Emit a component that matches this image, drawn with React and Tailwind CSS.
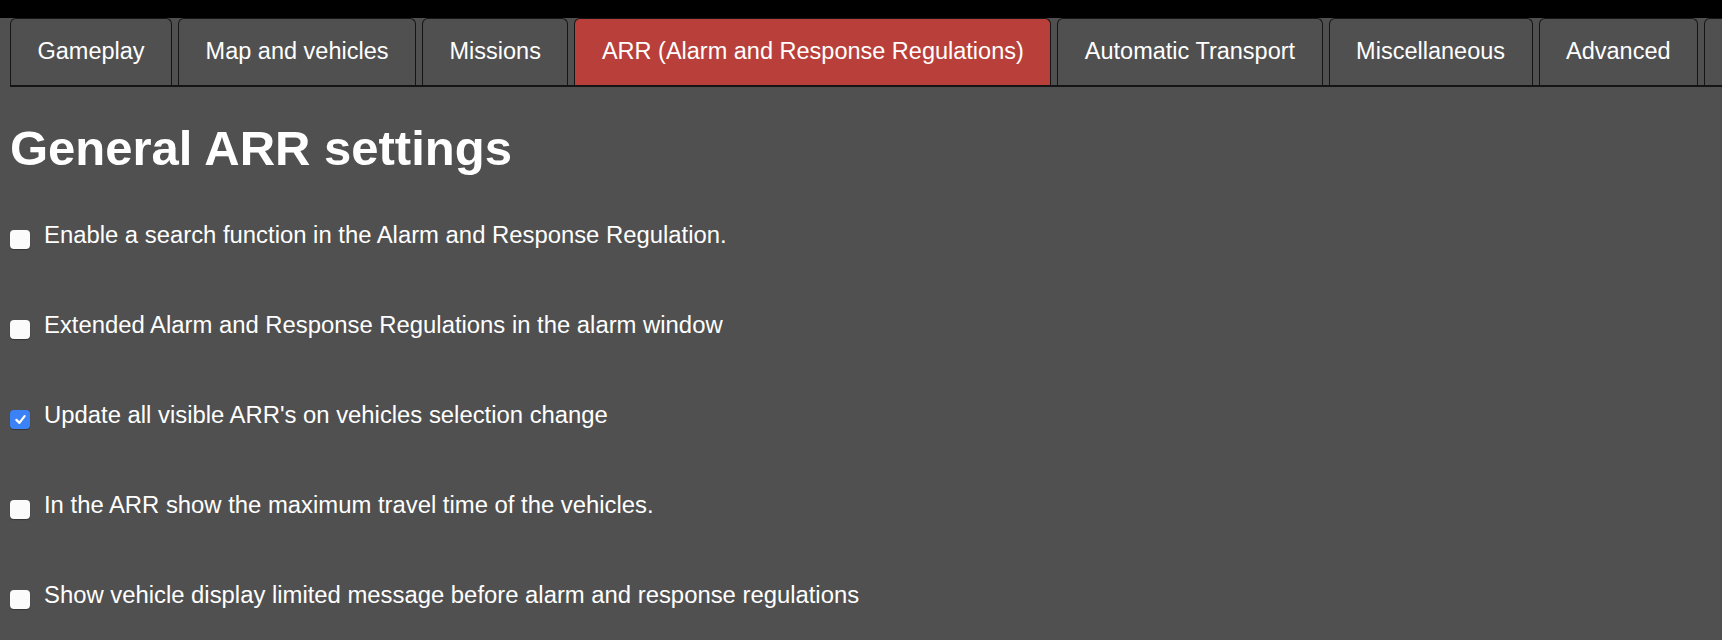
const tabs = [
  "Gameplay",
  "Map and vehicles",
  "Missions",
  "ARR (Alarm and Response Regulations)",
  "Automatic Transport",
  "Miscellaneous",
  "Advanced",
];

const settings = [
  { label: "Enable a search function in the Alarm and Response Regulation.", checked: false },
  { label: "Extended Alarm and Response Regulations in the alarm window", checked: false },
  { label: "Update all visible ARR's on vehicles selection change", checked: true },
  { label: "In the ARR show the maximum travel time of the vehicles.", checked: false },
  { label: "Show vehicle display limited message before alarm and response regulations", checked: false },
];

function Checkbox({ checked }) {
  if (checked) {
    return (
      <span className="mt-[8px] shrink-0 w-[20px] h-[19px] rounded-[4px] bg-[#3a82f6] flex items-center justify-center shadow-[0_1px_1px_rgba(0,0,0,0.35)]">
        <svg viewBox="0 0 20 20" className="w-[15px] h-[15px]" fill="none" stroke="#ffffff" strokeWidth="3" strokeLinecap="round" strokeLinejoin="round">
          <polyline points="4.5 10.5 8.5 14.5 15.5 5.5" />
        </svg>
      </span>
    );
  }
  return (
    <span className="mt-[8px] shrink-0 w-[20px] h-[19px] rounded-[4px] bg-[#fbfbfb] shadow-[0_1px_1px_rgba(0,0,0,0.35)]" />
  );
}

export default function App() {
  return (
    <div className="w-[1722px] h-[640px] overflow-hidden bg-[#505050] text-white font-['Liberation_Sans',Arial,Helvetica,sans-serif]">
      {/* top bar */}
      <div className="h-[18px] bg-black" />

      {/* tabs */}
      <div className="ml-[10px] flex flex-nowrap border-b-2 border-[#151515] overflow-hidden">
        {tabs.map((tab) => {
          const active = tab.startsWith("ARR");
          return (
            <div
              key={tab}
              className={
                "shrink-0 mr-[6px] h-[67px] px-[26.5px] flex items-center whitespace-nowrap text-[23.5px] rounded-t-[6px] border border-b-0 border-[#151515] " +
                (active ? "bg-[#b9403a]" : "bg-[#505050]")
              }
            >
              {tab}
            </div>
          );
        })}
        {/* next tab, cut off by the window edge */}
        <div className="shrink-0 w-[80px] h-[67px] rounded-t-[6px] border border-b-0 border-[#151515] bg-[#505050]" />
      </div>

      {/* content */}
      <div className="px-[10px]">
        <h1 className="mt-[34px] text-[49px] leading-[54px] font-bold">General ARR settings</h1>

        <div className="mt-[47px] flex flex-col gap-[63px]">
          {settings.map((s) => (
            <label key={s.label} className="flex items-start gap-[14px]">
              <Checkbox checked={s.checked} />
              <span className="text-[23.85px] leading-[26px] whitespace-nowrap">{s.label}</span>
            </label>
          ))}
        </div>
      </div>
    </div>
  );
}
